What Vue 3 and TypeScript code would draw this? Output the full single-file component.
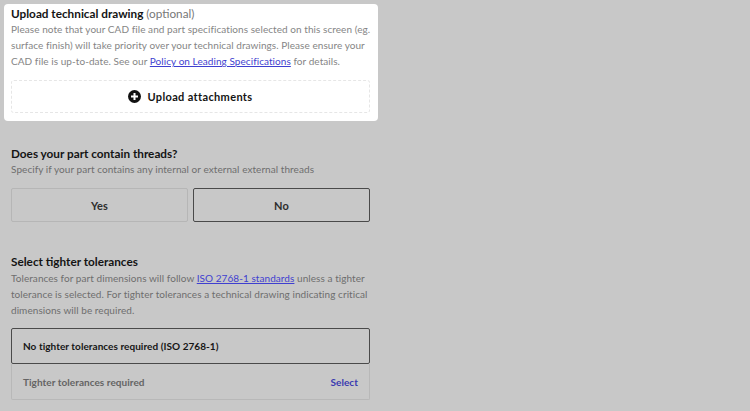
<script setup lang="ts">
const threadOptions: { label: string; selected: boolean }[] = [
  { label: "Yes", selected: false },
  { label: "No", selected: true },
];
</script>

<template>
  <div class="page">
    <section class="upload-card">
      <h2 class="title">Upload technical drawing <span class="optional">(optional)</span></h2>
      <p class="desc">
        Please note that your CAD file and part specifications selected on this screen (eg.
        surface finish) will take priority over your technical drawings. Please ensure your
        CAD file is up-to-date. See our <a class="link">Policy on Leading Specifications</a> for details.
      </p>
      <div class="dropzone">
        <svg class="plus" width="13" height="13" viewBox="0 0 13 13" aria-hidden="true">
          <circle cx="6.5" cy="6.5" r="6.5" fill="#111" />
          <path d="M6.5 3v7M3 6.5h7" stroke="#fff" stroke-width="2" />
        </svg>
        <span>Upload attachments</span>
      </div>
    </section>

    <section class="threads">
      <h2 class="title">Does your part contain threads?</h2>
      <p class="desc">Specify if your part contains any internal or external external threads</p>
      <div class="choice-row">
        <div
          v-for="opt in threadOptions"
          :key="opt.label"
          class="choice"
          :class="{ selected: opt.selected }"
        >
          {{ opt.label }}
        </div>
      </div>
    </section>

    <section class="tolerances">
      <h2 class="title">Select tighter tolerances</h2>
      <p class="desc">
        Tolerances for part dimensions will follow <a class="link">ISO 2768-1 standards</a> unless a tighter
        tolerance is selected. For tighter tolerances a technical drawing indicating critical
        dimensions will be required.
      </p>
      <div class="tol-list">
        <div class="tol-item active">No tighter tolerances required (ISO 2768-1)</div>
        <div class="tol-item">
          <span>Tighter tolerances required</span>
          <a class="select">Select</a>
        </div>
      </div>
    </section>
  </div>
</template>

<style>
html,
body {
  margin: 0;
  background: #c8c8c8;
  overflow: hidden;
}
</style>

<style scoped>
.page {
  width: 750px;
  height: 411px;
  box-sizing: border-box;
  padding: 4px 372px 0 4px;
  background: #c8c8c8;
  font-family: Lato, "Liberation Sans", sans-serif;
  color: #141414;
  overflow: hidden;
}
.upload-card {
  background: #fff;
  border-radius: 4px;
  height: 117px;
  box-sizing: border-box;
  padding: 2px 6px 7px 7px;
}
.title {
  margin: 0;
  font-size: 11.75px;
  line-height: 15px;
  font-weight: 700;
}
.optional {
  font-weight: 400;
  color: #777;
}
.desc {
  margin: 0;
  font-size: 10px;
  line-height: 16px;
  color: #858585;
  letter-spacing: 0.06px;
}
.tolerances .desc,
.threads .desc {
  color: #6e6e6e;
}
.link {
  color: #3f3fd0;
  text-decoration: underline;
}
.dropzone {
  margin: 11px 2px 0 0;
  height: 33px;
  box-sizing: border-box;
  border: 1px dashed #e6e6e6;
  border-radius: 3px;
  display: flex;
  align-items: center;
  justify-content: center;
  gap: 6px;
  font-size: 11px;
  font-weight: 700;
  letter-spacing: 0.35px;
}
.threads {
  margin: 25px 8px 0 7px;
}
.choice-row {
  display: flex;
  gap: 5px;
  margin-top: 11px;
}
.choice {
  flex: 1;
  height: 34px;
  box-sizing: border-box;
  display: flex;
  align-items: center;
  justify-content: center;
  border: 1px solid #b6b6b6;
  border-radius: 2px;
  font-size: 11px;
  font-weight: 700;
  color: #2e2e2e;
  letter-spacing: 0.2px;
}
.choice.selected {
  border-color: #4a4a4a;
}
.tolerances {
  margin: 32px 8px 0 7px;
}
.tolerances .desc {
  margin-top: 1px;
}
.tol-list {
  margin-top: 10px;
}
.tol-item {
  height: 36px;
  box-sizing: border-box;
  padding: 0 11px;
  display: flex;
  align-items: center;
  justify-content: space-between;
  border: 1px solid #b8b8b8;
  border-top: 0;
  border-radius: 0 0 2px 2px;
  font-size: 10px;
  font-weight: 700;
  color: #646464;
  letter-spacing: 0.05px;
}
.tol-item.active {
  border: 1px solid #4a4a4a;
  border-radius: 2px;
  color: #161616;
}
.select {
  color: #3a3ab0;
}
</style>
